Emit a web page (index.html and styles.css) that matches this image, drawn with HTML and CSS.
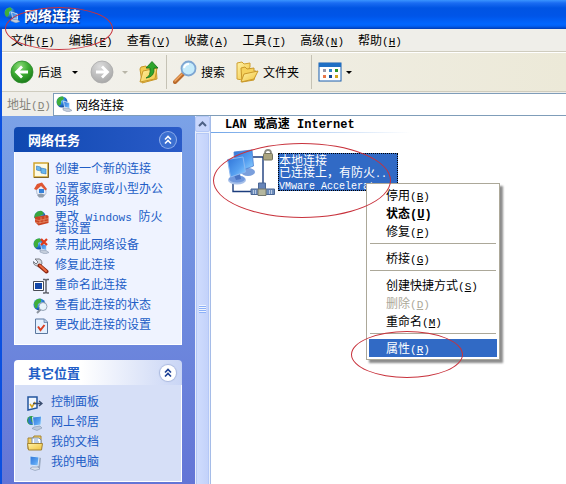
FILE: index.html
```html
<!DOCTYPE html>
<html lang="zh-CN">
<head>
    <meta charset="UTF-8">
    <meta name="viewport" content="width=device-width, initial-scale=1.0">
    <title>网络连接</title>
    <link rel="stylesheet" href="styles.css">
</head>
<body>

    <!-- shared gradients and symbols -->
    <svg class="defs" aria-hidden="true">
        <defs>
            <radialGradient id="green" cx="40%" cy="25%" r="75%">
                <stop offset="0" stop-color="#8fdc7c"/>
                <stop offset="0.5" stop-color="#3fae35"/>
                <stop offset="1" stop-color="#1c7d1b"/>
            </radialGradient>
            <radialGradient id="gray" cx="40%" cy="25%" r="75%">
                <stop offset="0" stop-color="#dcdcdc"/>
                <stop offset="1" stop-color="#a9a9a9"/>
            </radialGradient>
            <radialGradient id="globe" cx="35%" cy="30%" r="75%">
                <stop offset="0" stop-color="#9fe0ff"/>
                <stop offset="0.5" stop-color="#2c86dc"/>
                <stop offset="1" stop-color="#0c3f96"/>
            </radialGradient>
            <linearGradient id="screen" x1="0" y1="0" x2="1" y2="1">
                <stop offset="0" stop-color="#2f74d8"/>
                <stop offset="0.6" stop-color="#559ff0"/>
                <stop offset="1" stop-color="#8fd0ff"/>
            </linearGradient>
            <linearGradient id="folder" x1="0" y1="0" x2="1" y2="1">
                <stop offset="0" stop-color="#fff3a8"/>
                <stop offset="1" stop-color="#f0c23c"/>
            </linearGradient>
            <symbol id="net" viewBox="0 0 16 16">
                <circle cx="6" cy="6" r="5.500" fill="url(#globe)"/>
                <path d="M1 4Q3 0 7 .6L8 3 5 5 5 8 3 10Q0 8 1 4Z" fill="#3fae3a"/>
                <path d="M7.500 5l6 2v5.500l-5-1.500Z" fill="url(#screen)" stroke="#dfeaf7" stroke-width=".8"/>
                <path d="M7 12l6 0.500 3 2-4 1.500-5-2Z" fill="#c4cddb" stroke="#7f8fa8" stroke-width=".5"/>
            </symbol>
            <symbol id="chevrons" viewBox="0 0 16 16">
                <path d="M5 7.500l3-3 3 3M5 11.500l3-3 3 3" fill="none" stroke="currentColor" stroke-width="1.600"/>
            </symbol>
        </defs>
    </svg>

    <div class="window">
        <header class="titlebar">
            <svg class="icon"><use href="#net"/></svg>
            <h1>网络连接</h1>
        </header>

        <div class="frame">
            <nav class="menubar">
                <button>文件<span class="latin">(<u>F</u>)</span></button>
                <button>编辑<span class="latin">(<u>E</u>)</span></button>
                <button>查看<span class="latin">(<u>V</u>)</span></button>
                <button>收藏<span class="latin">(<u>A</u>)</span></button>
                <button>工具<span class="latin">(<u>T</u>)</span></button>
                <button>高级<span class="latin">(<u>N</u>)</span></button>
                <button>帮助<span class="latin">(<u>H</u>)</span></button>
            </nav>

            <div class="toolbar">
                <button class="tool back">
                    <svg class="tool-icon" viewBox="0 0 24 24">
                        <circle cx="12" cy="12" r="11" fill="url(#green)" stroke="#2c8a2b" stroke-width=".8"/>
                        <path d="M18 12H7M12 6.500L6.500 12l5.500 5.500" fill="none" stroke="#fff" stroke-width="2.800"/>
                    </svg>
                    <span>后退</span>
                    <i class="arrow"></i>
                </button>
                <button class="tool forward" aria-label="前进" disabled>
                    <svg class="tool-icon" viewBox="0 0 24 24">
                        <circle cx="12" cy="12" r="11" fill="url(#gray)" stroke="#aaa" stroke-width=".8"/>
                        <path d="M6 12h11M12 6.500l5.500 5.500-5.500 5.500" fill="none" stroke="#fff" stroke-width="2.800"/>
                    </svg>
                    <i class="arrow"></i>
                </button>
                <button class="tool up" aria-label="向上">
                    <svg class="tool-icon" viewBox="0 0 24 24">
                        <path d="M3 9l1-2 5-1 1 2 9-2 1 13-15 4Z" fill="#f2cb50" stroke="#c9982a"/>
                        <path d="M3 22l3-11 14-3-2 11Z" fill="url(#folder)" stroke="#c9982a"/>
                        <path d="M9 18q5-2 4-10H9l6-6.500 6 6.500h-4q1 9-8 10Z" fill="#2fa52d" stroke="#14701a" stroke-width=".8"/>
                    </svg>
                </button>
                <span class="divider"></span>
                <button class="tool search">
                    <svg class="tool-icon" viewBox="0 0 24 24">
                        <path d="M2 22l8-8" stroke="#b96a2c" stroke-width="4" stroke-linecap="round"/>
                        <path d="M2 21l7-7" stroke="#f2a860" stroke-width="1.500" stroke-linecap="round"/>
                        <circle cx="15.500" cy="8.500" r="7" fill="#c5ebfb" stroke="#7ea6d2" stroke-width="1.800"/>
                        <path d="M11 8q1-4 5-4" fill="none" stroke="#fff" stroke-width="2"/>
                    </svg>
                    <span>搜索</span>
                </button>
                <button class="tool folders">
                    <svg class="tool-icon" viewBox="0 0 24 24">
                        <path d="M2 3l5-1 2 2 6-1v4l-8 13-5-1Z" fill="url(#folder)" stroke="#d0a030"/>
                        <path d="M6 8l4-1 2 2 7-1v3l2 0-2 9-12 2Z" fill="#f6d25c" stroke="#c9982a"/>
                        <path d="M6 22l3-8 14-3-4 8Z" fill="url(#folder)" stroke="#c9982a"/>
                    </svg>
                    <span>文件夹</span>
                </button>
                <span class="divider"></span>
                <button class="tool views" aria-label="视图">
                    <svg class="tool-icon" viewBox="0 0 24 24">
                        <rect x="1" y="3" width="22" height="18" fill="#fff" stroke="#1b5fae"/>
                        <path d="M1 3h22v4H1Z" fill="#1f6fc4"/>
                        <path d="M5 9h3v3H5Z" fill="#99a"/>
                        <path d="M11 9h3v3h-3Z" fill="#38c"/>
                        <path d="M17 9h3v3h-3Z" fill="#2a962a"/>
                        <path d="M5 15h3v3H5Z" fill="#e8784a"/>
                        <path d="M11 15h3v3h-3Z" fill="#124a96"/>
                        <path d="M17 15h3v3h-3Z" fill="#d2a61a"/>
                    </svg>
                    <i class="arrow"></i>
                </button>
            </div>

            <div class="addressbar">
                <label for="address">地址<span class="latin">(<u>D</u>)</span></label>
                <div class="address-box">
                    <svg class="icon"><use href="#net"/></svg>
                    <input type="text" id="address" value="网络连接">
                </div>
            </div>

            <div class="content">
                <aside class="sidebar">
                    <section class="panel primary">
                        <div class="panel-header">
                            <h2>网络任务</h2>
                            <button class="toggle" aria-label="折叠"><svg class="icon"><use href="#chevrons"/></svg></button>
                        </div>
                        <ul>
                            <li>
                                <svg class="icon" viewBox="0 0 16 16">
                                    <rect x="1" y="1" width="14" height="14" fill="#fffbe2" stroke="#d1a531" stroke-width="1.500"/>
                                    <path d="M15.500 1v14.500H1" fill="none" stroke="#806528"/>
                                    <path d="M3.500 4l4 1v4l-4-1ZM8 6l5 1v5l-5-1Z" fill="#69b7ee" stroke="#3676bd" stroke-width=".6"/>
                                </svg>
                                <a href="#">创建一个新的连接</a>
                            </li>
                            <li>
                                <svg class="icon" viewBox="0 0 16 16">
                                    <path d="M3 6l5-4 5 5v5l-4 2-5-2Z" fill="#e7edf8" stroke="#9aa6bd" stroke-width=".6"/>
                                    <path d="M1 7l3-5 5-1.500L14 7l-1.500 1.500L8 4 3.500 8Z" fill="#df5633"/>
                                    <path d="M6 7h5v4H6Z" fill="#3681da"/>
                                    <path d="M4 13q4-3 8 0l-2 2.500H6Z" fill="#929dac"/>
                                </svg>
                                <a href="#">设置家庭或小型办公网络</a>
                            </li>
                            <li>
                                <svg class="icon" viewBox="0 0 16 16">
                                    <circle cx="7" cy="6.500" r="5.500" fill="url(#globe)"/>
                                    <path d="M2 4q3-4 7-3l2 3-6 3-4 1Z" fill="#38a540"/>
                                    <path d="M2 7l12-2 1.500 1v7l-10 2.500L2 12Z" fill="#c94322"/>
                                    <path d="M2 9.500l4 1 9.500-2M2 12l3.500 1 10-2M8 7v3M12 6v3M7 10.500v3M11 9.500v3" fill="none" stroke="#f2b28f" stroke-width=".5"/>
                                </svg>
                                <a href="#">更改<span class="latin"> Windows </span>防火墙设置</a>
                            </li>
                            <li>
                                <svg class="icon" viewBox="0 0 16 16">
                                    <use href="#net"/>
                                    <path d="M8 1l6 6M14 1L8 7" stroke="#df3c1c" stroke-width="2.200"/>
                                </svg>
                                <a href="#">禁用此网络设备</a>
                            </li>
                            <li>
                                <svg class="icon" viewBox="0 0 16 16">
                                    <path d="M2 1l3 3-2 2-2.500-2.500Q0 7 4 8l2 1 3-3Q9 0 4 1Z" fill="#d6dae0" stroke="#62666e" stroke-width=".8"/>
                                    <path d="M6.500 7.500l7 6" stroke="#8d2814" stroke-width="4" stroke-linecap="round"/>
                                    <path d="M7 7.500l6 5.500" stroke="#ed6b40" stroke-width="2" stroke-linecap="round"/>
                                </svg>
                                <a href="#">修复此连接</a>
                            </li>
                            <li>
                                <svg class="icon" viewBox="0 0 16 16">
                                    <path d="M0.500 3.500h10v9h-10Z" fill="#fff" stroke="#474b54"/>
                                    <path d="M2 5h7v6H2Z" fill="#1447a8"/>
                                    <path d="M10 1.500h2l1 1 1-1h2M13 2v12M10 15h2l1-1 1 1h2" fill="none" stroke="#5e626c" stroke-width="1.500"/>
                                </svg>
                                <a href="#">重命名此连接</a>
                            </li>
                            <li>
                                <svg class="icon" viewBox="0 0 16 16">
                                    <circle cx="6.500" cy="6.500" r="6" fill="url(#globe)"/>
                                    <path d="M1 5Q3 0 8 .8L8 4 5 6 4 10 2 10Z" fill="#3fae3a"/>
                                    <path d="M8 11l-4 4" stroke="#8b929d" stroke-width="2"/>
                                    <circle cx="10" cy="8.500" r="4" fill="#e8f4fc" stroke="#94a2b5"/>
                                </svg>
                                <a href="#">查看此连接的状态</a>
                            </li>
                            <li>
                                <svg class="icon" viewBox="0 0 16 16">
                                    <path d="M2.500 1h9l3 3v11.500h-12Z" fill="#e4f0ff" stroke="#5b779f"/>
                                    <path d="M11 1v3.500h3" fill="#b9cdea" stroke="#5b779f" stroke-width=".7"/>
                                    <path d="M5 8.500l2.500 3.500L11.500 7" fill="none" stroke="#da3f22" stroke-width="2"/>
                                </svg>
                                <a href="#">更改此连接的设置</a>
                            </li>
                        </ul>
                    </section>

                    <section class="panel places">
                        <div class="panel-header">
                            <h2>其它位置</h2>
                            <button class="toggle" aria-label="折叠"><svg class="icon"><use href="#chevrons"/></svg></button>
                        </div>
                        <ul>
                            <li>
                                <svg class="icon" viewBox="0 0 16 16">
                                    <path d="M1 2l9 0v11l-9 2Z" fill="#f2f7ff" stroke="#23569f" stroke-width="1.500"/>
                                    <path d="M3 9l2 3 3-5" fill="none" stroke="#d7a51f" stroke-width="1.500"/>
                                    <path d="M6 8.500h9M12 6l3 2.500-3 2.500" fill="none" stroke="#3a4d70" stroke-width="1.300"/>
                                </svg>
                                <a href="#">控制面板</a>
                            </li>
                            <li>
                                <svg class="icon" viewBox="0 0 16 16">
                                    <circle cx="4.500" cy="5.500" r="4.500" fill="#2e9d4c"/>
                                    <path d="M2 2q3 2 2 4l3 3q-5 2-6-3Z" fill="#2f75cf"/>
                                    <path d="M5.500 2l9-1-.5 9-7.500 1Z" fill="url(#screen)" stroke="#d7e7f9"/>
                                    <path d="M7 12l6-1 2 2-5 2.500-5-2Z" fill="#bdc9dc" stroke="#8093af" stroke-width=".6"/>
                                </svg>
                                <a href="#">网上邻居</a>
                            </li>
                            <li>
                                <svg class="icon" viewBox="0 0 16 16">
                                    <path d="M1 3h5l1-2h7v13H1Z" fill="#f2cf60" stroke="#a38335"/>
                                    <path d="M5 3h7l2 2v7H5Z" fill="#fff" stroke="#7a91b8"/>
                                    <path d="M7 5h4M7 7h5" stroke="#7ba0d4"/>
                                    <path d="M.5 8.500h15l-1 6.500h-13Z" fill="url(#folder)" stroke="#a38335"/>
                                </svg>
                                <a href="#">我的文档</a>
                            </li>
                            <li>
                                <svg class="icon" viewBox="0 0 16 16">
                                    <path d="M11 2l3 1-1 10-3 1Z" fill="#9aa9c0"/>
                                    <path d="M3 1l9 1-1 9-8-1Z" fill="url(#screen)" stroke="#d7e7f9"/>
                                    <path d="M5 12l6 0 2 2-5 1.500-5-2Z" fill="#d9e0ea" stroke="#8093af" stroke-width=".6"/>
                                </svg>
                                <a href="#">我的电脑</a>
                            </li>
                        </ul>
                    </section>
                </aside>

                <div class="scrollbar">
                    <button class="scroll-up" aria-label="向上滚动">
                        <svg viewBox="0 0 9 6"><path d="M1 5l3.500-3.500L8 5" fill="none" stroke="#4d6185" stroke-width="2"/></svg>
                    </button>
                    <div class="thumb"><i class="grip"></i></div>
                </div>

                <main>
                    <h2 class="group-title">LAN <span class="cjk">或高速</span> Internet</h2>
                    <button class="connection">
                        <svg class="connection-icon" viewBox="0 0 48 48">
                            <path d="M26 8h10v26M6 35v7.500h19" fill="none" stroke="#1c3d7d" stroke-width="1.400"/>
                            <ellipse cx="21" cy="23" rx="7" ry="4" fill="#7a9fdc"/>
                            <path d="M7 3L25 1l1.500 16-9 3.500L8 20Z" fill="url(#screen)" stroke="#4a7fd0" stroke-width=".8"/>
                            <ellipse cx="10" cy="31" rx="9" ry="4.500" fill="#a5bfe9"/>
                            <ellipse cx="10" cy="30" rx="8" ry="3.500" fill="#7199dd"/>
                            <path d="M7 26l6-1 1 5-5 1Z" fill="#4a75c4"/>
                            <path d="M.5 10.500L16 8l2.500 15L3.500 28Z" fill="url(#screen)" stroke="#8cb9f2"/>
                            <path d="M38 5V4q0-3 3-3t3 3v1" fill="none" stroke="#8b8b82" stroke-width="1.800"/>
                            <rect x="36.500" y="4.500" width="9" height="6.500" rx="1" fill="#aaa47f" stroke="#75745f"/>
                            <path d="M24 40h23.500v5.500H24Z" fill="#6c8cba" stroke="#4a6695"/>
                            <path d="M31.500 34h7v8h-7Z" fill="#6684b8" stroke="#4a6695"/>
                            <path d="M31 40h8v6.500h-8Z" fill="#b5b79e" stroke="#74796f"/>
                            <path d="M26.500 41v4M28.500 41v4M42.500 41v4M44.500 41v4" stroke="#b9c9e2"/>
                        </svg>
                        <span class="connection-text">本地连接<br>已连接上，有防火<span class="latin">..</span><br><span class="latin">VMware Accelerat..</span></span>
                    </button>
                </main>
            </div>
        </div>

        <div class="context-menu" role="menu">
            <button role="menuitem">停用<span class="latin">(<u>B</u>)</span></button>
            <button role="menuitem" class="default">状态<span class="latin">(<u>U</u>)</span></button>
            <button role="menuitem">修复<span class="latin">(<u>P</u>)</span></button>
            <hr>
            <button role="menuitem">桥接<span class="latin">(<u>G</u>)</span></button>
            <hr>
            <button role="menuitem">创建快捷方式<span class="latin">(<u>S</u>)</span></button>
            <button role="menuitem" disabled>删除<span class="latin">(<u>D</u>)</span></button>
            <button role="menuitem">重命名<span class="latin">(<u>M</u>)</span></button>
            <hr>
            <button role="menuitem" class="active">属性<span class="latin">(<u>R</u>)</span></button>
        </div>

        <!-- red marker rings -->
        <span class="ring ring-title"></span>
        <span class="ring ring-connection"></span>
        <span class="ring ring-properties"></span>
    </div>

</body>
</html>
```

FILE: styles.css
```css
* {
    box-sizing: border-box;
}

body {
    margin: 0;
    font-family: "Noto Sans CJK SC", sans-serif;
    font-size: 12px;
    line-height: 12px;
    color: #000;
    background: #fff;
}

button {
    margin: 0;
    padding: 0;
    border: none;
    background: none;
    font: inherit;
    color: inherit;
    white-space: nowrap;
}

h1, h2, ul {
    margin: 0;
    padding: 0;
}

a {
    color: #215dc6;
    text-decoration: none;
}

a:hover {
    text-decoration: underline;
}

.defs {
    position: absolute;
    width: 0;
    height: 0;
}

.icon {
    width: 16px;
    height: 16px;
    flex: none;
}

.latin {
    font-family: "Liberation Mono", monospace;
    font-size: 11px;
    line-height: 1px;
    white-space: pre-wrap;
}

.window {
    position: relative;
    display: flex;
    flex-direction: column;
    min-height: 100vh;
    overflow: hidden;
}

/* title bar */
.titlebar {
    display: flex;
    align-items: center;
    gap: 4px;
    height: 29px;
    padding: 0 4px;
    background: linear-gradient(#3a94ff 0, #1a6cf2 3px, #0054e3 8px, #0055e8 16px, #0066ff 24px, #0060f5 26px, #003cb4 29px);
}

.titlebar h1 {
    font-size: 14px;
    line-height: 16px;
    color: #fff;
    text-shadow: 1px 1px 1px #0a2a80;
}

.frame {
    flex: 1;
    display: flex;
    flex-direction: column;
    border-left: 2px solid #0a50e0;
}

/* menu bar */
.menubar {
    display: flex;
    gap: 14px;
    height: 23px;
    padding-left: 9px;
    background: #efeee9;
    border-bottom: 1px solid #cfccbe;
}

/* toolbar */
.toolbar {
    display: flex;
    align-items: center;
    height: 40px;
    padding-left: 8px;
    background: linear-gradient(to right, #f3f2ee, #ece9d8);
    border-top: 1px solid #fff;
    border-bottom: 1px solid #cfccbe;
}

.tool {
    display: flex;
    align-items: center;
    gap: 4px;
}

.tool-icon {
    width: 24px;
    height: 24px;
}

.arrow {
    border: 3px solid transparent;
    border-top-color: #000;
    border-bottom: none;
}

.back .arrow {
    margin-left: 6px;
}

.forward {
    gap: 8px;
    margin-left: 12px;
}

.forward .arrow {
    border-top-color: #b8b5a8;
}

.up {
    margin-left: 9px;
}

.divider {
    width: 1px;
    height: 34px;
    margin: 0 6px 0 5px;
    background: #c5c2b5;
}

.folders {
    margin-left: 10px;
}

.folders + .divider {
    margin-left: 12px;
}

/* address bar */
.addressbar {
    display: flex;
    align-items: center;
    height: 24px;
    background: #efeee9;
}

.addressbar label {
    width: 51px;
    padding-left: 5px;
    color: #858379;
}

.address-box {
    flex: 1;
    display: flex;
    align-items: center;
    gap: 4px;
    height: 23px;
    padding-left: 2px;
    background: #fff;
    border: 1px solid #7f9db9;
    border-right: none;
}

.address-box input {
    flex: 1;
    min-width: 0;
    padding: 0;
    border: none;
    outline: none;
    font: inherit;
}

.content {
    flex: 1;
    display: flex;
}

/* task pane */
.sidebar {
    width: 193px;
    padding: 11px 13px 2px 12px;
    background: linear-gradient(#7ba2e7, #6375d6);
}

.panel + .panel {
    margin-top: 15px;
}

.panel-header {
    display: flex;
    align-items: center;
    justify-content: space-between;
    height: 25px;
    padding: 0 6px 0 14px;
    border-radius: 4px 4px 0 0;
}

.panel-header h2 {
    font-size: 13px;
    line-height: 14px;
}

.primary .panel-header {
    color: #fff;
    background: linear-gradient(to right, #0f48b0, #2a5bc8);
}

.places .panel-header {
    color: #215dc6;
    background: linear-gradient(to right, #fff 40%, #c9d5f5);
}

.toggle {
    display: flex;
    border-radius: 50%;
}

.primary .toggle {
    background: #3b6fd0;
    box-shadow: 0 0 0 1px #8cacea;
}

.places .toggle {
    color: #1c3f94;
    background: #fff;
    box-shadow: 0 0 1px 1px #a9b8de;
}

.panel ul {
    display: flex;
    flex-direction: column;
    gap: 4px;
    list-style: none;
    border: 1px solid #fff;
    border-top: none;
}

.panel li {
    display: flex;
    min-height: 16px;
}

.primary ul {
    padding: 10px 15px 10px 18px;
    background: #eff3ff;
}

.primary li {
    gap: 6px;
}

.places ul {
    padding: 10px 12px;
    background: #d6dff7;
}

.places li {
    gap: 8px;
}

/* scroll bar */
.scrollbar {
    display: flex;
    flex-direction: column;
    width: 16px;
    background: #e8eefb;
    border-right: 1px solid #a5bce8;
}

.scroll-up {
    display: flex;
    align-items: center;
    justify-content: center;
    height: 16px;
    background: #c8d6fb;
    border: 1px solid #b4c8f6;
    border-radius: 2px;
}

.scroll-up svg {
    width: 9px;
    height: 6px;
}

.thumb {
    flex: 1;
    display: flex;
    align-items: center;
    justify-content: center;
    margin: 1px 1px 0;
    background: linear-gradient(to right, #cfdcfd, #c3d2fa);
    border: 1px solid #b4c8f6;
    border-bottom: none;
}

.grip {
    width: 7px;
    height: 8px;
    background: repeating-linear-gradient(#eef4fe 0 1px, #8cb0f8 1px 2px);
}

/* connection list */
main {
    flex: 1;
    min-width: 0;
    background: #fff;
}

.group-title {
    height: 17px;
    padding: 3px 0 0 14px;
    font-family: "Liberation Mono", monospace;
    font-size: 12px;
    line-height: 12px;
    border-bottom: 1px solid;
    border-image: linear-gradient(to right, #70a5e8, #fff 200px) 1;
}

.group-title .cjk {
    font-family: "Noto Sans CJK SC", sans-serif;
    line-height: 1px;
}

.connection {
    display: flex;
    align-items: flex-start;
    gap: 3px;
    margin: 16px 0 0 16px;
    text-align: left;
}

.connection-icon {
    width: 48px;
    height: 48px;
}

.connection-text {
    width: 120px;
    margin-top: 4px;
    color: #fff;
    background: #316ac5;
    border: 1px dotted #000;
}

.connection-text .latin {
    font-size: 10px;
}

/* context menu */
.context-menu {
    position: absolute;
    left: 366px;
    top: 183px;
    width: 134px;
    padding: 2px;
    background: #fff;
    border: 1px solid #aca899;
    box-shadow: 3px 3px 2px rgba(0, 0, 0, 0.45);
}

.context-menu button {
    display: block;
    width: 100%;
    height: 18px;
    padding-left: 17px;
    text-align: left;
}

.context-menu button:disabled {
    color: #aca899;
}

.context-menu .default {
    font-weight: bold;
}

.context-menu .default .latin {
    font-size: 12px;
}

.context-menu .active {
    color: #fff;
    background: #316ac5;
}

.context-menu hr {
    height: 1px;
    margin: 3px 1px 5px;
    border: none;
    background: #aca899;
}

/* marker rings */
.ring {
    position: absolute;
    border: 1px solid #c8323c;
    border-radius: 50%;
    pointer-events: none;
}

.ring-title {
    left: 5px;
    top: 7px;
    width: 108px;
    height: 43px;
}

.ring-connection {
    left: 213px;
    top: 143px;
    width: 178px;
    height: 75px;
}

.ring-properties {
    left: 351px;
    top: 331px;
    width: 112px;
    height: 47px;
}
```
